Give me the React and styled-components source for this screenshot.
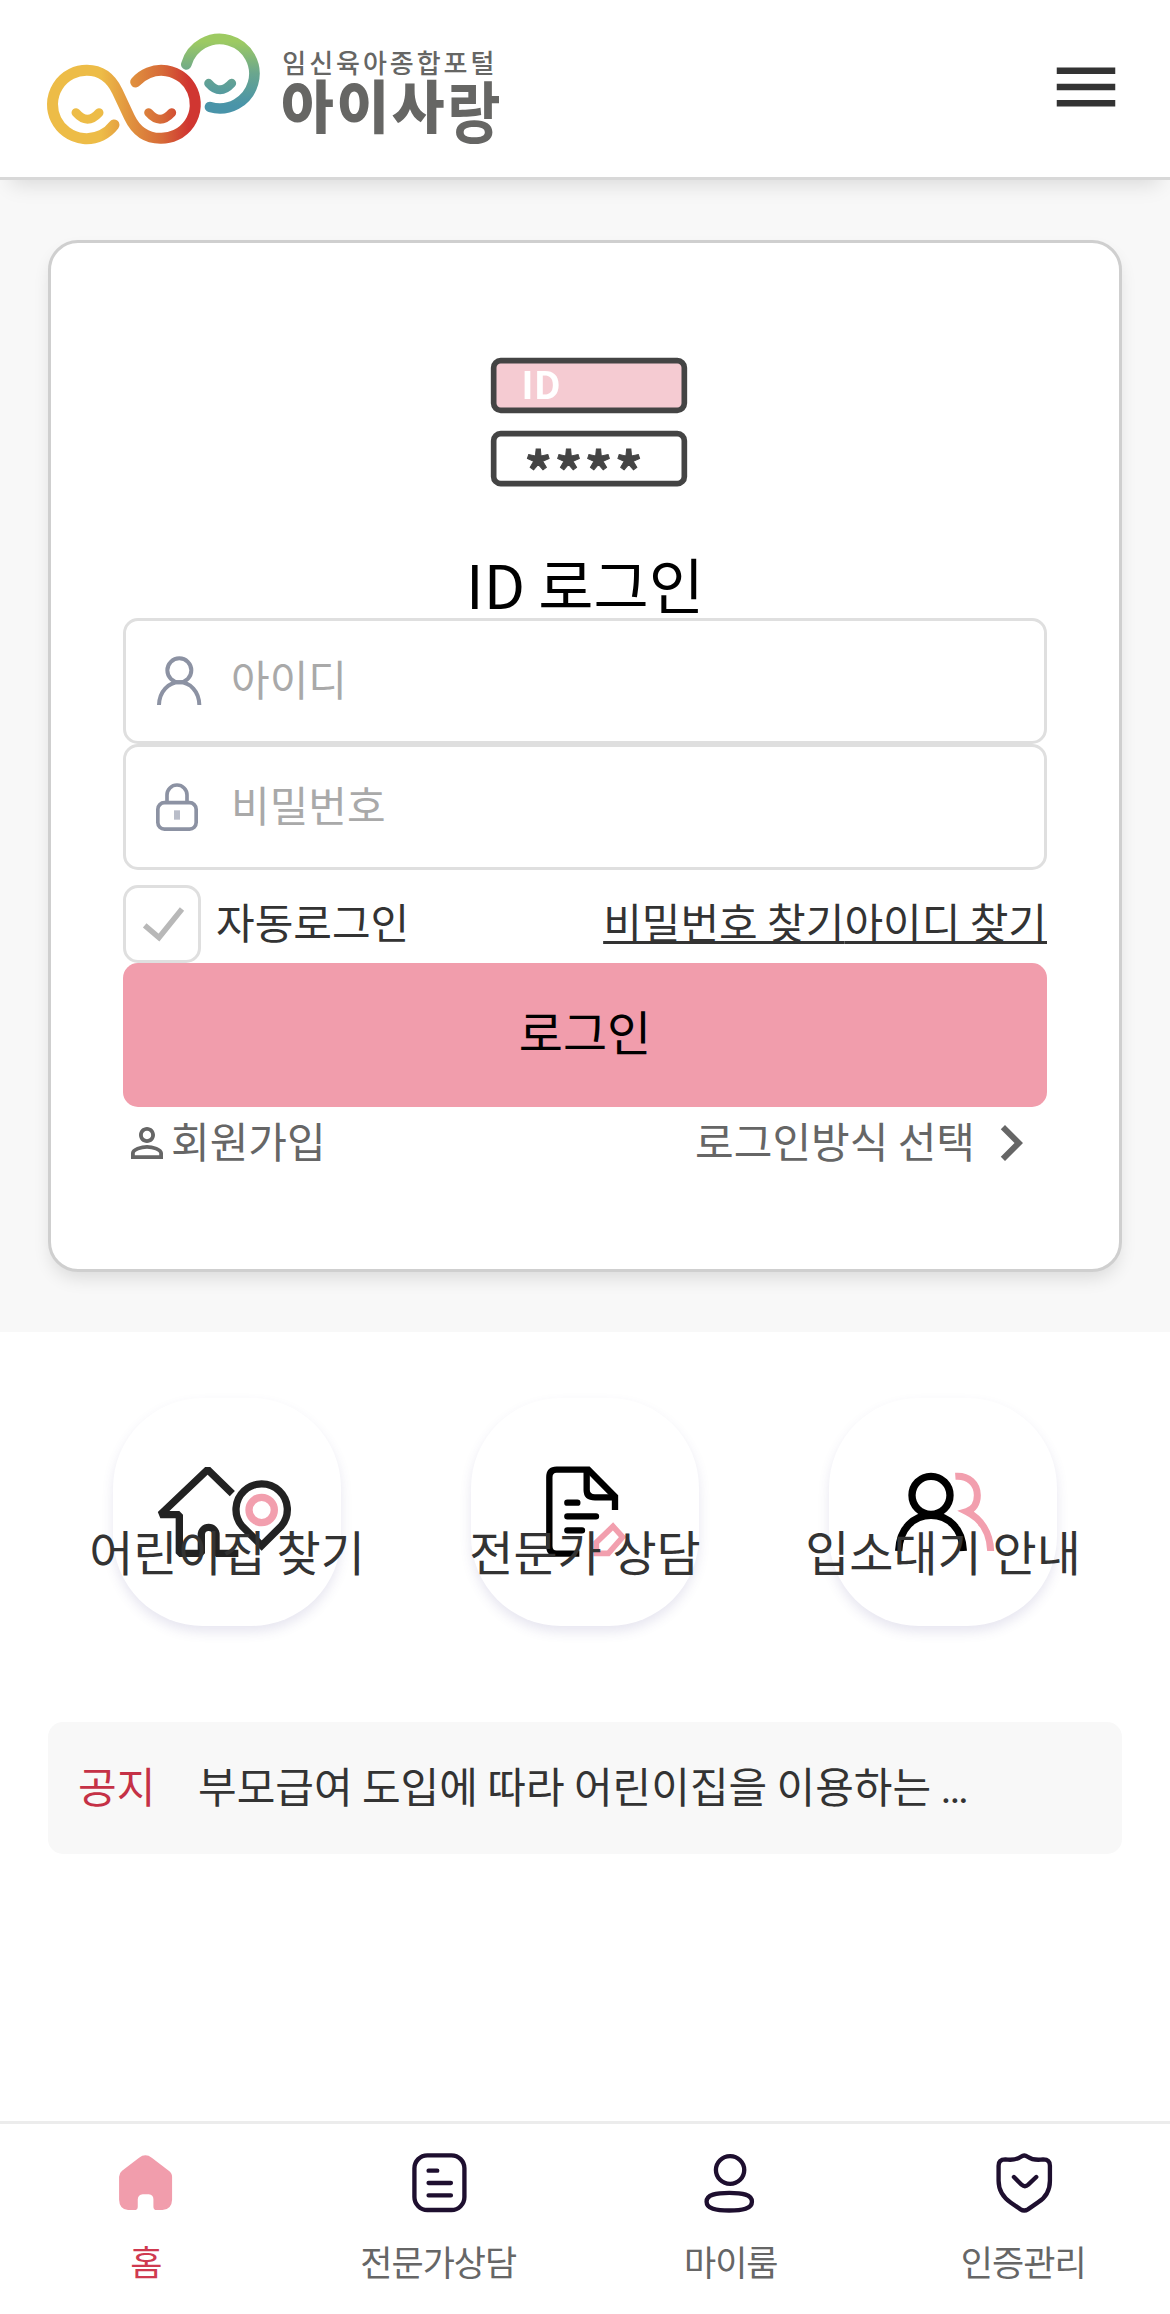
import React from "react";
import styled, { createGlobalStyle } from "styled-components";

const GlobalStyle = createGlobalStyle`
  * {
    box-sizing: border-box;
  }
  body {
    margin: 0;
    background: #fff;
    color: #333;
    font-family: "Noto Sans CJK KR", "Noto Sans", sans-serif;
    font-size: 42px;
  }
  p,
  h1 {
    margin: 0;
    font-weight: 400;
  }
  svg {
    display: block;
    flex-shrink: 0;
    overflow: visible;
  }
  a {
    color: inherit;
  }
  button {
    font-family: inherit;
    border: none;
    background: none;
    padding: 0;
  }
`;

const Page = styled.div`
  width: 1170px;
  height: 2314px;
  display: flex;
  flex-direction: column;
  overflow: hidden;
`;

const Header = styled.header`
  height: 180px;
  flex-shrink: 0;
  display: flex;
  align-items: flex-start;
  justify-content: space-between;
  padding: 24px 45px 0 42px;
  background: #fff;
  border-bottom: 3px solid #d8d8d8;
  box-shadow: 0 15px 20px -11px rgba(0, 0, 0, 0.13);
  z-index: 1;
  button {
    margin-top: 24px;
  }
`;

const LoginSection = styled.section`
  background: #f8f8f8;
  padding: 60px 48px;
`;

const Card = styled.form`
  height: 1032px;
  display: flex;
  flex-direction: column;
  align-items: center;
  padding: 111px 72px 0;
  background: #fff;
  border: 3px solid #cfcfcf;
  border-radius: 30px;
  box-shadow: 0 9px 18px -3px rgba(0, 0, 0, 0.12);
`;

const Title = styled.h1`
  margin: 33px 0 -1px;
  font-size: 60px;
  line-height: 72px;
  color: #000;
`;

const Text = styled.span`
  padding-bottom: 6px;
`;

const Field = styled.div`
  width: 100%;
  height: 126px;
  display: flex;
  align-items: center;
  padding-left: 30px;
  border: 3px solid #dfdfdf;
  border-radius: 15px;
  .icon {
    width: 75px;
    filter: blur(0.6px);
  }
  input {
    flex: 1;
    min-width: 0;
    height: 100%;
    padding: 0 0 8px;
    border: none;
    outline: none;
    background: none;
    font: inherit;
    &::placeholder {
      color: #a9a9a9;
      opacity: 1;
    }
  }
`;

const OptionRow = styled.div`
  width: 100%;
  margin-top: 15px;
  display: flex;
  align-items: center;
  justify-content: space-between;
  line-height: 60px;
  a {
    text-decoration-thickness: 3px;
  }
`;

const AutoLogin = styled.label`
  display: flex;
  align-items: center;
  gap: 15px;
`;

const CheckBox = styled.span`
  width: 78px;
  height: 78px;
  display: flex;
  border: 3px solid #dfdfdf;
  border-radius: 15px;
`;

const LoginButton = styled.button`
  && {
    width: 100%;
    height: 144px;
    flex-shrink: 0;
    padding-bottom: 11px;
    border-radius: 15px;
    background: #f19dac;
    color: #000;
    font-size: 48px;
    line-height: 60px;
  }
`;

const JoinRow = styled.div`
  width: 100%;
  height: 72px;
  display: flex;
  align-items: center;
  justify-content: space-between;
  color: #666;
  line-height: 60px;
  div {
    display: flex;
    align-items: center;
  }
`;

const QuickMenu = styled.nav`
  display: grid;
  grid-template-columns: repeat(3, 1fr);
  padding: 66px 48px 0;
  height: 390px;
`;

const QuickItem = styled.div`
  display: flex;
  flex-direction: column;
  align-items: center;
  p {
    margin-top: -112px;
    font-size: 48px;
    line-height: 72px;
    white-space: nowrap;
    z-index: 1;
  }
`;

const QuickIcon = styled.div`
  width: 228px;
  height: 228px;
  border-radius: 90px;
  background: #fff;
  box-shadow: 0 6px 12px rgba(70, 60, 140, 0.13);
  svg {
    filter: blur(0.6px);
  }
`;

const Notice = styled.div`
  height: 132px;
  margin: 0 48px;
  padding: 0 30px 7px;
  display: flex;
  align-items: center;
  border-radius: 15px;
  background: #f8f8f8;
  line-height: 60px;
  .label {
    width: 120px;
    color: #c53146;
  }
  .more {
    font-family: Roboto, sans-serif;
    line-height: 1;
  }
`;

const BottomNav = styled.nav`
  height: 193px;
  margin-top: auto;
  display: grid;
  grid-template-columns: repeat(4, 1fr);
  border-top: 3px solid #ececec;
`;

const NavItem = styled.div`
  display: flex;
  flex-direction: column;
  align-items: center;
  padding-top: 22px;
  font-size: 35px;
  line-height: 48px;
  letter-spacing: -1px;
  color: ${(props) => (props.$active ? "#cf3a50" : "#666")};
  p {
    margin: 19px 0 0 -1px;
  }
`;

const Logo = () => (
  <svg width="462" height="126" viewBox="36 12 1386 378">
    <defs>
      <linearGradient id="warm" gradientUnits="userSpaceOnUse" x1="52" y1="0" x2="512" y2="0">
        <stop offset="0.35" stopColor="#edbc47" />
        <stop offset="0.55" stopColor="#e0903e" />
        <stop offset="0.75" stopColor="#d66a38" />
        <stop offset="0.92" stopColor="#d03631" />
      </linearGradient>
      <linearGradient id="cool" gradientUnits="userSpaceOnUse" x1="0" y1="41" x2="0" y2="279">
        <stop offset="0.1" stopColor="#9dca62" />
        <stop offset="0.5" stopColor="#6aa68e" />
        <stop offset="0.9" stopColor="#4994a9" />
      </linearGradient>
    </defs>
    <g fill="none" strokeLinecap="round">
      <g stroke="url(#cool)">
        <path strokeWidth="32" d="M469 133 A104 104 0 1 1 540 261" />
        <path strokeWidth="27" d="M536 190 Q570 229 605 190" />
      </g>
      <g stroke="url(#warm)">
        <path
          strokeWidth="33"
          d="M252 315 A102.500 102.500 0 1 1 171 151 C215 151 243 175 262 214 L298 291 C318 333 347 355 391 355 A102 102 0 1 0 317 186"
        />
        <path strokeWidth="27" d="M138 278 Q172 317 207 278" />
        <path strokeWidth="27" d="M356 278 Q390 317 425 278" />
      </g>
    </g>
    <g fill="#666664">
      <text x="757" y="159" fontSize="78" fontWeight="500" textLength="636">
        임신육아종합포털
      </text>
      <text x="753" y="325" fontSize="172" fontWeight="900" letterSpacing="8">
        아이사
      </text>
      <text transform="translate(1252 355) scale(0.87 1)" fontSize="200" fontWeight="700">
        랑
      </text>
    </g>
  </svg>
);

const IdCardIcon = styled(({ className }) => (
  <svg className={className} width="210" height="160" viewBox="120 72 630 480">
    <g stroke="#444" strokeWidth="17">
      <rect x="161" y="92" width="572" height="149" rx="21" fill="#f5cbd2" />
      <rect x="161" y="311" width="572" height="150" rx="21" fill="#fff" />
    </g>
    <text x="244" y="207" fontSize="113" fontWeight="700" fill="#fff">
      ID
    </text>
    <text
      x="254 345 435 526"
      y="486"
      fontSize="160"
      fontWeight="700"
      fill="#444"
      stroke="#444"
      strokeWidth="3"
    >
      ****
    </text>
  </svg>
))`
  filter: blur(0.6px);
`;

const UserIcon = () => (
  <svg width="46" height="49" viewBox="168 168 138 147">
    <g fill="none" stroke="#8c92a3" strokeWidth="12">
      <circle cx="238" cy="208" r="36" />
      <path d="M177 312 C178 271 205 244 238 244 C271 244 297 271 298 312" />
    </g>
  </svg>
);

const LockIcon = () => (
  <svg width="42" height="48" viewBox="168 548 126 144">
    <g fill="none" stroke="#8c92a3" strokeWidth="11">
      <path d="M201 605 V584 A30 30 0 0 1 261 584 V605" />
      <rect x="173.500" y="607" width="115" height="79.500" rx="20" />
    </g>
    <rect x="222" y="630" width="18" height="28" fill="#b9bdc9" />
  </svg>
);

const PersonIcon = () => (
  <svg width="48" height="48" viewBox="0 0 24 24" fill="#666">
    <path d="M12 5.900c1.160 0 2.100.94 2.100 2.100s-.94 2.100-2.100 2.100S9.900 9.160 9.900 8s.94-2.100 2.100-2.100m0 9c2.970 0 6.100 1.460 6.100 2.100v1.100H5.900V17c0-.64 3.130-2.100 6.100-2.100M12 4C9.790 4 8 5.790 8 8s1.790 4 4 4 4-1.790 4-4-1.790-4-4-4m0 9c-2.670 0-8 1.340-8 4v3h16v-3c0-2.660-5.330-4-8-4" />
  </svg>
);

const quickMenus = [
  {
    title: "어린이집 찾기",
    icon: (
      <svg width="228" height="228" viewBox="159 84 684 684" fill="none">
        <g stroke="#222" strokeWidth="22">
          <path
            strokeLinejoin="bevel"
            d="M517 371 L443 299 L301 434 H358 V550 H424 V494 A22 22 0 0 1 468 494 V550 H535"
          />
          <path d="M605 527 L546 468 A77 77 0 1 1 664 468 Z" />
        </g>
        <circle cx="605" cy="420" r="38" stroke="#f29fae" strokeWidth="22" />
      </svg>
    ),
  },
  {
    title: "전문가 상담",
    icon: (
      <svg width="228" height="228" viewBox="93 84 684 684" fill="none">
        <g stroke="#000" strokeWidth="19">
          <path d="M525 420 V380 L445 299 H350 Q328 299 328 322 V528 Q328 551 350 551 H418" />
          <path d="M440 300 V360 Q440 382 465 382 H525" />
          <path strokeLinecap="round" d="M382 398 H412 M382 439 H468 M382 481 H426" />
        </g>
        <path d="M519 469 L548 501 L505 550 H469 V517 Z" stroke="#f29fae" strokeWidth="17" />
      </svg>
    ),
  },
  {
    title: "입소대기 안내",
    icon: (
      <svg width="228" height="228" viewBox="147 84 684 684" fill="none">
        <g stroke="#000" strokeWidth="22">
          <circle cx="453" cy="376" r="57" />
          <path d="M356 543 C359 474 402 436 453 436 C504 436 547 474 550 543" />
        </g>
        <path
          d="M526 319 C566 316 592 341 592 376 C592 401 580 419 560 425 C602 446 630 486 632 543"
          stroke="#f29fae"
          strokeWidth="21"
        />
      </svg>
    ),
  },
];

const navMenus = [
  {
    title: "홈",
    icon: (
      <svg width="72" height="72" viewBox="150.750 138 216 216" fill="#f19dac">
        <path d="M178 230 Q178 219 187 212 L238 173 Q257 159 276 173 L327 212 Q337 219 337 230 V299 Q336 328 308 330 H291 Q281 330 281 320 V298 Q281 284 267 283 H249 Q235 284 234 298 V320 Q234 330 224 330 H205 Q179 328 178 299 Z" />
      </svg>
    ),
  },
  {
    title: "전문가상담",
    icon: (
      <svg width="72" height="72" viewBox="1028.250 138 216 216" fill="none">
        <g stroke="#1e0f2f" strokeWidth="13" strokeLinecap="round">
          <rect x="1062.500" y="166" width="150" height="164" rx="39" />
          <path d="M1105 212 H1131 M1105 249 H1172 M1105 286 H1172" />
        </g>
      </svg>
    ),
  },
  {
    title: "마이룸",
    icon: (
      <svg width="72" height="72" viewBox="285.750 138 216 216" fill="none">
        <g stroke="#1e0f2f" strokeWidth="13">
          <ellipse cx="391" cy="210" rx="42.500" ry="41.500" />
          <path d="M320.500 305 C320.500 284 348 278.500 388.500 278.500 C429 278.500 456.500 284 456.500 305 C456.500 326 429 331.500 388.500 331.500 C348 331.500 320.500 326 320.500 305 Z" />
        </g>
      </svg>
    ),
  },
  {
    title: "인증관리",
    icon: (
      <svg width="72" height="72" viewBox="1163.250 138 216 216" fill="none">
        <g stroke="#1e0f2f" strokeWidth="13" strokeLinecap="round">
          <path d="M1262 170 Q1272 163 1282 170 C1298 181 1312 181 1329 178 Q1349 178 1349 197 V242 C1349 272 1335 294 1312 308 L1283 328 Q1272 335 1261 328 L1232 308 C1209 292 1195 272 1195 242 V197 Q1195 178 1215 178 C1232 181 1246 181 1262 170 Z" />
          <path d="M1241 231 L1264 254 Q1274 263 1284 254 L1308 231" />
        </g>
      </svg>
    ),
  },
];

const LoginCard = () => {
  return (
    <Card>
      <IdCardIcon />
      <Title>ID 로그인</Title>
      <Field>
        <span className="icon">
          <UserIcon />
        </span>
        <input type="text" placeholder="아이디" />
      </Field>
      <Field>
        <span className="icon">
          <LockIcon />
        </span>
        <input type="password" placeholder="비밀번호" />
      </Field>
      <OptionRow>
        <AutoLogin>
          <CheckBox>
            <svg width="72" height="72" viewBox="126 888 72 72" fill="none">
              <path d="M144.700 925.300 L159 937.500 L182 909" stroke="#b8b8b8" strokeWidth="5.500" />
            </svg>
          </CheckBox>
          <Text>자동로그인</Text>
        </AutoLogin>
        <Text>
          <a href="#password">비밀번호 찾기</a>
          <a href="#id">아이디 찾기</a>
        </Text>
      </OptionRow>
      <LoginButton type="button">로그인</LoginButton>
      <JoinRow>
        <div>
          <PersonIcon />
          <Text>회원가입</Text>
        </div>
        <div>
          <Text>로그인방식 선택</Text>
          <svg width="72" height="72" viewBox="0 0 24 24" fill="#666">
            <path d="M10 6 8.590 7.410 13.170 12l-4.580 4.590L10 18l6-6z" />
          </svg>
        </div>
      </JoinRow>
    </Card>
  );
};

const App = () => {
  return (
    <>
      <GlobalStyle />
      <Page>
        <Header>
          <Logo />
          <button type="button" aria-label="메뉴">
            <svg width="78" height="78" viewBox="0 0 24 24" fill="#333">
              <path d="M3 18h18v-2H3zm0-5h18v-2H3zm0-7v2h18V6z" />
            </svg>
          </button>
        </Header>
        <LoginSection>
          <LoginCard />
        </LoginSection>
        <QuickMenu>
          {quickMenus.map((menu) => (
            <QuickItem key={menu.title}>
              <QuickIcon>{menu.icon}</QuickIcon>
              <p>{menu.title}</p>
            </QuickItem>
          ))}
        </QuickMenu>
        <Notice>
          <p className="label">공지</p>
          <p>
            부모급여 도입에 따라 어린이집을 이용하는 <span className="more">…</span>
          </p>
        </Notice>
        <BottomNav>
          {navMenus.map((menu, index) => (
            <NavItem key={menu.title} $active={index === 0}>
              {menu.icon}
              <p>{menu.title}</p>
            </NavItem>
          ))}
        </BottomNav>
      </Page>
    </>
  );
};

export default App;
